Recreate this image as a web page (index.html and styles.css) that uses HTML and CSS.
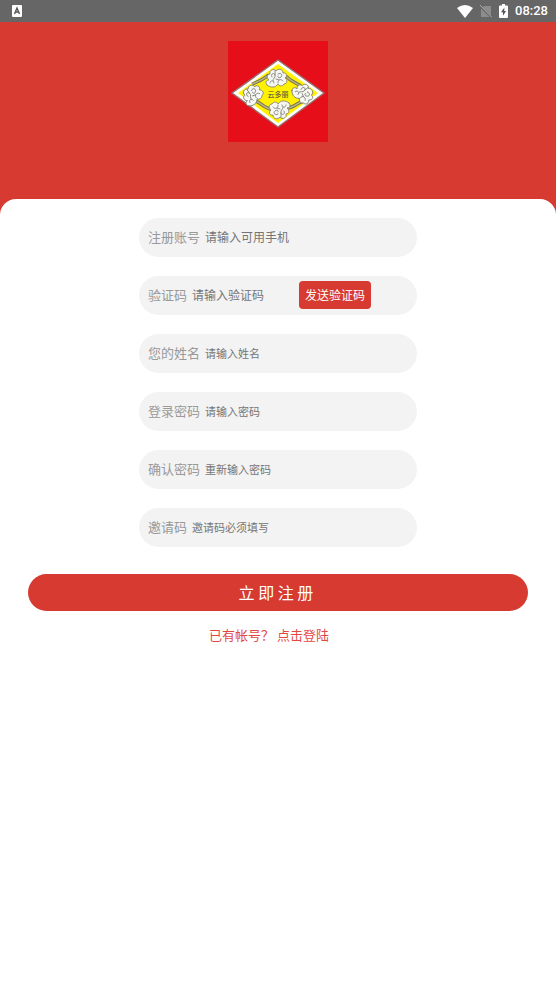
FILE: index.html
```html
<!DOCTYPE html>
<html lang="zh-CN">
<head>
    <meta charset="UTF-8">
    <meta name="viewport" content="width=device-width, initial-scale=1.0">
    <title>注册</title>
    <link rel="stylesheet" href="styles.css">
</head>
<body>
    <div class="status-bar">
        <svg class="status-app" width="10" height="12" viewBox="0 0 10 12">
            <rect width="10" height="12" rx="1" fill="#fff"/>
            <path d="M2.5 9 5 3l2.5 6M3.4 7h3.2" fill="none" stroke="#555" stroke-width="1.4"/>
        </svg>
        <div class="status-icons">
            <svg width="16" height="13" viewBox="0 0 16 13">
                <path d="M8 13 0 3Q8-3 16 3Z" fill="#fff"/>
            </svg>
            <svg width="12" height="13" viewBox="0 0 12 13">
                <path d="M4 1h7v11H1V4Z" fill="#8c8c8c"/>
                <path d="M0 1l12 12" stroke="#666" stroke-width="2"/>
                <path d="M0 0l12 12.5" stroke="#aaa" stroke-width="1"/>
            </svg>
            <svg width="9" height="14" viewBox="0 0 9 14">
                <path d="M3 0h3v1.5h2q1 0 1 1V13q0 1-1 1H1q-1 0-1-1V2.5q0-1 1-1h2Z" fill="#fff"/>
                <path d="M5.4 3.5 2 8.3h2v3.4L7 7H5.2Z" fill="#555"/>
            </svg>
            <span class="status-time">08:28</span>
        </div>
    </div>

    <header class="banner">
        <svg class="logo" viewBox="0 0 100 101" role="img" aria-label="云多丽">
            <defs>
                <g id="cloud" fill="#f6f6f2" stroke="#77776f" stroke-width="0.8" stroke-linecap="round" stroke-linejoin="round">
                    <path d="M-9 7c-2-2-1-5 2-5-3-2-2-6 1-6-1-4 4-6 6-3 2-3 7-2 7 2 3-1 5 3 2 5 3 2 2 6-1 6-2 3-5 2-6 0-3 4-7 4-11 1Z"/>
                    <path d="M-6 5c0-3 4-3 4 0M-4-1c-2-3 2-5 3-2s-3 4-2 6M2-4c3-2 5 1 3 3s-4 0-3-1M2 5c-1-3 3-5 5-2M-1-7v4M0 1l3 1" fill="none"/>
                </g>
            </defs>
            <rect width="100" height="101" fill="#e60f19"/>
            <path d="M50 19 96 52 50 86 4 52Z" fill="#fff" stroke="#94726f" stroke-width="1.4"/>
            <path d="M50 23 90 52 50 82 10 52Z" fill="#fff100"/>
            <path d="M41 34c-6 4-8 6-17 9M58 35c5 6 9 6 15 10M27 60c6 1 9 8 17 8M76 60c-7 1-9 7-17 7" fill="none" stroke="#77714f" stroke-width="3.4"/>
            <path d="M41 34c-6 4-8 6-17 9M58 35c5 6 9 6 15 10M27 60c6 1 9 8 17 8M76 60c-7 1-9 7-17 7" fill="none" stroke="#bdb684" stroke-width="1.4"/>
            <use href="#cloud" x="48" y="37"/>
            <use href="#cloud" transform="translate(24 54) rotate(-35)"/>
            <use href="#cloud" transform="translate(75 52) rotate(50)"/>
            <use href="#cloud" transform="translate(52 69) rotate(180)"/>
            <text class="logo-text" x="50" y="56" text-anchor="middle">云多丽</text>
        </svg>
    </header>

    <main class="panel">
        <form class="register">
            <div class="field">
                <label for="account">注册账号</label>
                <input class="large" type="tel" id="account" placeholder="请输入可用手机">
            </div>
            <div class="field">
                <label for="code">验证码</label>
                <input class="large code" type="text" id="code" placeholder="请输入验证码">
                <button class="send" type="button">发送验证码</button>
            </div>
            <div class="field">
                <label for="name">您的姓名</label>
                <input type="text" id="name" placeholder="请输入姓名">
            </div>
            <div class="field">
                <label for="password">登录密码</label>
                <input type="password" id="password" placeholder="请输入密码">
            </div>
            <div class="field">
                <label for="confirm">确认密码</label>
                <input type="password" id="confirm" placeholder="重新输入密码">
            </div>
            <div class="field">
                <label for="invite">邀请码</label>
                <input type="text" id="invite" placeholder="邀请码必须填写">
            </div>
            <button class="submit" type="submit">立 即 注 册</button>
        </form>
        <p class="login"><a href="#">已有帐号？ 点击登陆</a></p>
    </main>
</body>
</html>
```
FILE: styles.css
```css
* {
    box-sizing: border-box;
}

body {
    margin: 0;
    min-height: 100vh;
    background-color: #fff;
    font-family: "Noto Sans CJK SC", sans-serif;
    font-size: 13px;
    line-height: 20px;
}

input,
button {
    font-family: inherit;
    border: none;
}

.status-bar {
    display: flex;
    align-items: center;
    justify-content: space-between;
    height: 22px;
    padding: 0 8px 0 12px;
    background-color: #666;
    color: #fff;
}

.status-icons {
    display: flex;
    align-items: center;
    gap: 7px;
}

.status-time {
    font-family: Roboto, sans-serif;
    font-size: 13px;
    font-weight: 500;
}

.banner {
    display: flex;
    justify-content: center;
    padding: 19px 0 77px;
    background-color: #d63a31;
}

.logo {
    display: block;
    width: 100px;
}

.logo-text {
    font-size: 7px;
    fill: #444;
}

.panel {
    margin-top: -20px;
    padding: 19px 5% 0;
    border-radius: 16px 16px 0 0;
    background-color: #fff;
}

.register {
    display: flex;
    flex-direction: column;
    align-items: center;
    gap: 19px;
}

.field {
    display: flex;
    align-items: center;
    width: 278px;
    height: 39px;
    padding: 0 9px 2px;
    border-radius: 20px;
    background-color: #f3f3f3;
}

.field label {
    color: #999;
}

.field input {
    flex: 1;
    min-width: 0;
    padding: 0 0 0 5px;
    background: none;
    font-size: 11px;
    outline: none;
}

.field input.large {
    font-size: 12px;
}

.field input.code {
    flex: 0 1 112px;
}

.field input::placeholder {
    color: #757575;
}

.send {
    height: 28px;
    padding: 0 6px;
    border-radius: 4px;
    background-color: #d63a31;
    color: #fff;
    font-size: 12px;
}

.submit {
    width: 100%;
    height: 37px;
    margin-top: 8px;
    padding: 0 4px 2px 0;
    border-radius: 19px;
    background-color: #d63a31;
    color: #fff;
    font-size: 16px;
}

.login {
    margin: 14px 18px 0 0;
    text-align: center;
}

.login a {
    color: #e2483f;
    text-decoration: none;
}
```
